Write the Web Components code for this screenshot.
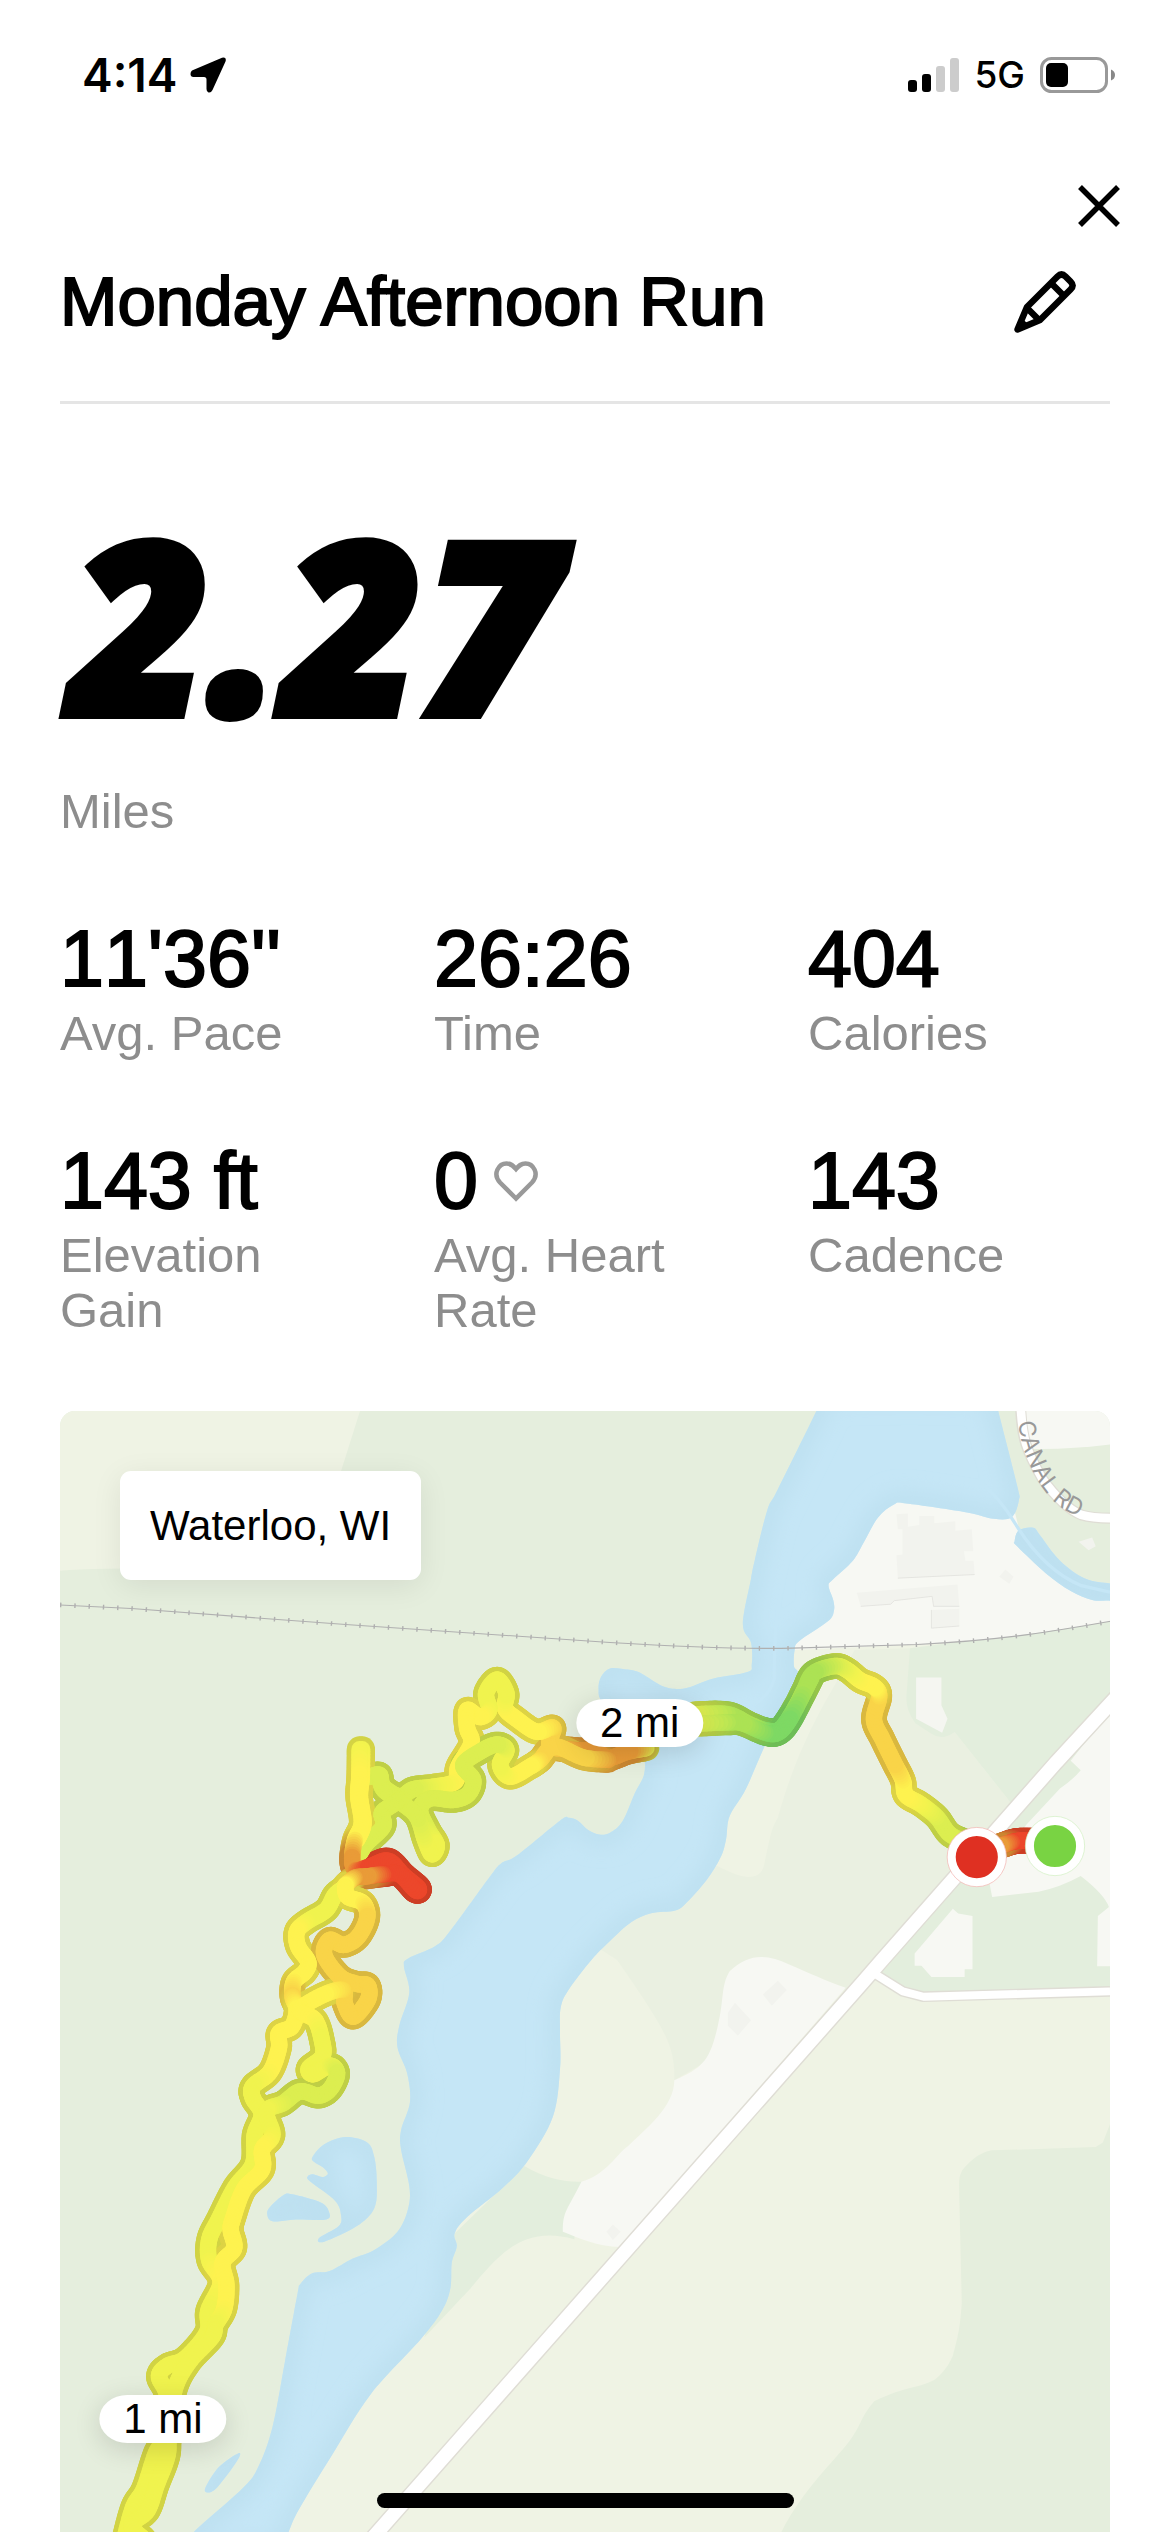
<!DOCTYPE html>
<html lang="en">
<head>
<meta charset="utf-8">
<meta name="viewport" content="width=device-width, initial-scale=1">
<title>Monday Afternoon Run</title>
<style>
  body { margin: 0; background: #fff; color: #000; font-family: "Liberation Sans", Arial, sans-serif; }
</style>
</head>
<body>
<run-screen>
  <status-bar slot="status" time="4:14" network="5G"></status-bar>
  <run-header slot="header">Monday Afternoon Run</run-header>
  <run-hero slot="hero" unit="Miles">2.27</run-hero>
  <run-stats slot="stats">
    <run-stat label="Avg. Pace">11'36''</run-stat>
    <run-stat label="Time">26:26</run-stat>
    <run-stat label="Calories">404</run-stat>
    <run-stat label="Elevation Gain">143 ft</run-stat>
    <run-stat label="Avg. Heart Rate">0<heart-icon slot="icon"></heart-icon></run-stat>
    <run-stat label="Cadence">143</run-stat>
  </run-stats>
  <run-map slot="map">
    <map-place slot="place">Waterloo, WI</map-place>
    <mile-pin style="left:55.2%;top:27.8%">2 mi</mile-pin>
    <mile-pin style="left:9.8%;top:89.9%">1 mi</mile-pin>
  </run-map>
</run-screen>

<script>
const define = (name, html, setup) => {
  const template = document.createElement('template');
  template.innerHTML = html;
  customElements.define(name, class extends HTMLElement {
    constructor() {
      super();
      this.attachShadow({ mode: 'open' }).append(template.content.cloneNode(true));
    }
    connectedCallback() { if (setup) setup(this, this.shadowRoot); }
  });
};

define('run-screen', `
<style>
  :host { display: block; }
  main { display: flex; flex-direction: column; padding: 0 60px; }
  .stats { margin-top: 75px; }
  .map { margin-top: 73px; }
  .home { position: fixed; left: 50%; bottom: 24px; width: 417px; height: 15px; margin-left: -208px; border-radius: 8px; background: #000; }
</style>
<slot name="status"></slot>
<slot name="header"></slot>
<main>
  <slot name="hero"></slot>
  <div class="stats"><slot name="stats"></slot></div>
  <div class="map"><slot name="map"></slot></div>
</main>
<div class="home"></div>`);

define('status-bar', `
<style>
  :host { display: flex; justify-content: space-between; align-items: center; height: 150px; padding: 0 55px 0 82px; font-family: Inter, sans-serif; }
  .side { display: flex; align-items: center; }
  .time { font-size: 46px; font-weight: 600; line-height: 56px; }
  .net { font-size: 37px; font-weight: 500; line-height: 46px; }
  .left { gap: 13px; } .right { gap: 15px; }
  svg { display: block; }
</style>
<div class="side left">
  <span class="time"></span>
  <svg width="37" height="36" viewBox="0 0 37 36"><path d="M2 13.500 32 .8Q37-.2 35.500 4.500L22.500 33Q21 36 18.500 35.500 16.500 35 16.500 32V22.500Q16.500 20 14 20H3.500Q.5 20 .5 17 .5 14.500 2 13.500Z"/></svg>
</div>
<div class="side right">
  <svg width="51" height="34" viewBox="0 0 51 34">
    <rect y="22" width="9" height="12" rx="3"/><rect x="14" y="16" width="9" height="18" rx="3"/>
    <g fill="#ccc"><rect x="28" y="8" width="9" height="26" rx="3"/><rect x="42" width="9" height="34" rx="3"/></g>
  </svg>
  <span class="net"></span>
  <svg width="75" height="36" viewBox="0 0 75 36">
    <rect x="1.500" y="1.500" width="65" height="33" rx="10" fill="none" stroke="#999" stroke-width="3"/>
    <rect x="6" y="6" width="22" height="24" rx="5"/><path d="M71 12.500Q75 14 75 18T71 23.500Z" fill="#888"/>
  </svg>
</div>`, (el, root) => {
  root.querySelector('.time').textContent = el.getAttribute('time');
  root.querySelector('.net').textContent = el.getAttribute('network');
});

define('run-header', `
<style>
  :host { display: block; }
  .close { display: flex; justify-content: flex-end; align-items: center; height: 112px; padding-right: 30px; }
  .title { display: flex; justify-content: space-between; align-items: center; margin: 0 60px; padding-bottom: 59px; border-bottom: 3px solid #e5e5e5; }
  h1 { margin: 0; font-size: 69px; line-height: 80px; font-weight: 400; -webkit-text-stroke: 2px currentColor; }
  button { display: flex; align-items: center; justify-content: center; width: 82px; height: 80px; padding: 0; border: 0; background: none; color: #000; }
  .edit { margin-right: 24px; }
</style>
<div class="close"><button aria-label="Close">
  <svg width="42" height="42" viewBox="0 0 42 42"><path d="M2 2 40 40M40 2 2 40" stroke="currentColor" stroke-width="5.500"/></svg>
</button></div>
<div class="title">
  <h1><slot></slot></h1>
  <button class="edit" aria-label="Edit name">
    <svg width="62" height="62" viewBox="0 0 62 62" fill="none" stroke="currentColor" stroke-width="6.500" stroke-linejoin="round">
      <path d="M3.500 58.500 13 36 43.500 5.500Q47.500 1.500 51.500 5.500L56.500 10.500Q60.500 14.500 56.500 18.500L26 49Z"/><path d="M37 12 50 25M13 37 25 49"/><path d="M4 58 8 49 14 54Z" fill="currentColor" stroke-width="2"/>
    </svg>
  </button>
</div>`);

define('run-hero', `
<style>
  :host { display: flex; flex-direction: column; gap: 52px; padding-top: 108px; }
  .figure { padding-left: 10px; font: italic 800 240px/220px "Open Sans", sans-serif; -webkit-text-stroke: 8px currentColor; }
  .unit { font-size: 49px; line-height: 55px; color: #8d8d8d; }
</style>
<div class="figure"><slot></slot></div>
<div class="unit"></div>`, (el, root) => { root.querySelector('.unit').textContent = el.getAttribute('unit'); });

define('run-stats', `
<style>:host { display: grid; grid-template-columns: repeat(3, 1fr); gap: 75px 72px; }</style>
<slot></slot>`);

define('run-stat', `
<style>
  :host { display: flex; flex-direction: column; gap: 2px; }
  .value { display: flex; align-items: center; gap: 16px; font-size: 79px; line-height: 90px; font-kerning: none; -webkit-text-stroke: 2px currentColor; }
  .label { font-size: 49px; line-height: 55px; color: #8d8d8d; }
</style>
<div class="value"><span><slot></slot></span><slot name="icon"></slot></div>
<div class="label"></div>`, (el, root) => { root.querySelector('.label').textContent = el.getAttribute('label'); });

define('heart-icon', `
<style>:host { display: block; } svg { display: block; }</style>
<svg width="44" height="41" viewBox="0 0 44 41"><path d="M22 37.500 6 21.500C-2 12.500 5 2.500 12.500 2.500 17 2.500 19 4.500 22 8 25 4.500 27 2.500 31.500 2.500 39 2.500 46 12.500 38 21.500Z" fill="none" stroke="#999" stroke-width="4.500"/></svg>`);

define('map-place', `
<style>:host { display: block; padding: 27px 30px; border-radius: 11px; background: #fff; font-size: 42px; line-height: 55px; box-shadow: 0 6px 30px rgba(0,0,0,.08); }</style>
<slot></slot>`);

define('mile-pin', `
<style>:host { position: absolute; transform: translate(-50%, -50%); padding: 0 24px; border-radius: 28px / 24px; background: #fff; font-size: 42px; line-height: 48px; white-space: nowrap; box-shadow: 0 6px 28px rgba(0,0,0,.14); }</style>
<slot></slot>`);

/* Catmull-Rom spline through a flat list of coordinates, closed as an area. */
const area = flat => {
  const p = [];
  for (let i = 0; i < flat.length; i += 2) p.push([flat[i], flat[i + 1]]);
  const n = p.length, at = i => p[(i + n) % n];
  let d = `M${p[0]}`;
  for (let i = 0; i < n; i++) {
    const [a, b, c, e] = [at(i - 1), at(i), at(i + 1), at(i + 2)];
    d += `C${b[0] + (c[0] - a[0]) / 6} ${b[1] + (c[1] - a[1]) / 6} ${c[0] - (e[0] - b[0]) / 6} ${c[1] - (e[1] - b[1]) / 6} ${c}`;
  }
  return d + 'Z';
};

const WATER = [
  [2140,-20, 2118,31, 2010,250, 1980,310, 1945,450, 1935,500, 1912,628, 1935,680, 1937,740, 1925,762, 1830,780, 1760,805, 1720,809, 1680,798, 1620,762, 1580,754, 1540,752, 1515,775, 1508,810, 1520,850, 1600,950, 1634,1000, 1635,1050, 1610,1100, 1575,1180, 1540,1212, 1510,1217, 1480,1205, 1450,1178, 1425,1170, 1400,1178, 1280,1275, 1235,1298, 1200,1340, 1090,1490, 1050,1530, 975,1564, 963,1586, 978,1660, 950,1752, 945,1813, 972,1885, 980,1966, 955,2045, 955,2099, 978,2201, 975,2263, 945,2329, 880,2380, 820,2404, 755,2439, 705,2446, 672,2477, 665,2503, 630,2692, 595,2876, 555,2988, 510,3049, 375,3170, 340,3220, 620,3220, 640,3170, 670,3105, 760,2957, 870,2784, 1010,2630, 1070,2549, 1093,2487, 1097,2416, 1111,2370, 1105,2334, 1140,2288, 1240,2206, 1310,2130, 1380,2007, 1400,1874, 1400,1772, 1402,1701, 1425,1650, 1488,1568, 1540,1515, 1600,1462, 1655,1437, 1720,1430, 1750,1412, 1810,1345, 1850,1280, 1865,1230, 1875,1165, 1920,1090, 1975,965, 2030,850, 2065,770, 2055,745, 2057,700, 2070,675, 2150,620, 2167,590, 2165,560, 2152,520, 2165,502, 2220,450, 2250,400, 2290,330, 2335,293, 2370,290, 2540,315, 2615,333, 2665,328, 2685,280, 2680,240, 2627,31, 2615,-20],
  [2673,395, 2685,365, 2725,358, 2745,380, 2800,450, 2870,500, 2940,514, 2990,520, 2990,565, 2940,562, 2890,560, 2830,535, 2760,485, 2680,410],
  [707,2120, 740,2084, 800,2064, 860,2079, 880,2120, 887,2191, 880,2263, 830,2314, 740,2357, 725,2347, 780,2314, 787,2283, 770,2242, 700,2188, 694,2174, 708,2168, 735,2176, 750,2166, 735,2148, 712,2134],
  [580,2278, 590,2258, 625,2227, 650,2224, 730,2247, 753,2273, 745,2295, 660,2295, 595,2300],
  [500,2949, 495,2972, 440,3045, 412,3059, 408,3044, 445,2988]
].map(area);

/* Pace colours, fast to slow. */
const PACE = { G: [126,217,100], E: [172,226,84], L: [220,238,80], M: [240,243,78], Y: [254,242,79], A: [249,212,72], O: [233,155,56], R: [236,71,43] };

const TRACK = [
  'R 2787 1232 R 2720 1234 R 2690 1234 R 2665 1238 O 2630 1250 O 2600 1262',
  'E 2567 1262 E 2535 1238 L 2490 1215 L 2455 1168 M 2410 1132 Y 2368 1106 Y 2360 1065 A 2335 1015 A 2303 950 A 2279 895 A 2294 830 Y 2280 803 Y 2240 785 M 2205 757 L 2170 745 E 2110 765 E 2085 810 E 2065 850 G 2035 900 G 2012 925 G 1975 925 E 1930 908 E 1870 880 L 1780 880',
  'E 2105 775 E 2080 825 G 2040 900 G 2010 932 G 1975 932 E 1910 905 E 1870 903 L 1780 907',
  'L 1642 975 O 1590 985 O 1535 1003 O 1502 984 O 1440 980 A 1372 968 A 1381 918 Y 1334 929 Y 1278 893 Y 1246 863 M 1250 821 M 1224 783 M 1193 821 M 1202 868 Y 1176 888 Y 1140 868 Y 1140 919 Y 1152 961 Y 1115 1027 Y 1106 1069 M 1045 1083 L 989 1090 L 952 1110 L 905 1083 L 895 1050 L 868 1055',
  'O 1535 1008 A 1465 1001 A 1385 970 A 1344 1008 Y 1316 1027 Y 1260 1055 M 1232 1022 M 1250 980 L 1222 965 L 1176 985 L 1129 1022 L 1157 1064 L 1143 1104 L 1101 1120 L 1036 1116 L 1008 1148 L 1031 1204 M 1055 1246 M 1041 1272 M 1022 1232 L 999 1166 L 952 1125 L 905 1090 L 895 1050',
  'L 952 1120 L 929 1135 L 901 1157 L 905 1194 L 859 1241 L 840 1269',
  'M 846 978 Y 845 1055 Y 840 1111 Y 850 1185 Y 832 1232',
  'M 839 978 Y 838 1055 Y 835 1111 Y 845 1185 Y 826 1232 O 818 1285 O 828 1316 R 868 1306 R 919 1290 R 961 1330 R 1003 1366 R 994 1372 R 950 1328 R 905 1328 O 859 1334 O 825 1338 Y 798 1360',
  'Y 798 1365 M 770 1386 M 745 1428 M 691 1461 Y 663 1489 Y 667 1531 Y 695 1573 Y 686 1601 Y 655 1629 A 651 1671 Y 663 1708 Y 649 1755 Y 613 1773 Y 613 1815 Y 588 1882 M 540 1922 M 540 1955 M 565 2000 M 545 2058 M 540 2140 M 490 2205 M 445 2293 M 418 2350 M 418 2410 Y 450 2470 M 415 2550 M 412 2610 M 350 2684 M 300 2705 M 277 2735 M 300 2790 M 295 2900 M 268 2950 M 235 3049 M 205 3100 M 180 3190',
  'Y 798 1365 Y 806 1391 Y 849 1409 A 860 1451 A 833 1505 A 793 1526 A 755 1512 A 740 1554 A 784 1615 A 831 1635 A 862 1640 A 862 1680 A 821 1727 A 797 1689 A 793 1652 Y 737 1666 Y 672 1708 Y 714 1736 M 733 1792 M 735 1838 M 697 1871 M 709 1888 M 756 1864 L 776 1887 L 756 1930 L 723 1948 L 672 1936 L 625 1969 M 578 1992 M 595 2058 Y 566 2099 Y 566 2155 Y 515 2210 Y 485 2290 Y 478 2324 Y 488 2375 Y 455 2416 Y 466 2477 Y 460 2545 M 435 2590 M 425 2625 M 360 2696 M 320 2775 M 305 2900 M 300 2960 M 270 3040 M 245 3110 M 200 3150 M 235 3190'
];

const trace = text => {
  const t = text.split(' '), p = [];
  for (let i = 0; i < t.length; i += 3) p.push([+t[i + 1], +t[i + 2], ...PACE[t[i]]]);
  const out = [];
  for (let i = 0; i < p.length - 1; i++) {
    const a = p[Math.max(i - 1, 0)], b = p[i], c = p[i + 1], e = p[Math.min(i + 2, p.length - 1)];
    for (let s = 0; s < 8; s++) {
      const u = s / 8;
      out.push(b.map((v, k) => {
        if (k > 1) return v + (c[k] - v) * u;
        const linear = (c[k] - a[k]) * u;
        const square = (2 * a[k] - 5 * v + 4 * c[k] - e[k]) * u * u;
        const cube = (3 * v - a[k] - 3 * c[k] + e[k]) * u * u * u;
        return (2 * v + linear + square + cube) / 2;
      }));
    }
  }
  out.push(p[p.length - 1]);
  return out;
};

const strokes = (track, width, shade) => track.slice(1).map((q, i) => {
  const o = track[i], c = q.slice(2).map(v => Math.round(v * shade));
  return `<line x1="${o[0].toFixed(1)}" y1="${o[1].toFixed(1)}" x2="${q[0].toFixed(1)}" y2="${q[1].toFixed(1)}" stroke="rgb(${c})" stroke-width="${width}"/>`;
}).join('');

const tracks = TRACK.map(trace);
const route = tracks.map(t => strokes(t, 72, .87)).join('') + tracks.map(t => strokes(t, 46, 1)).join('');
const water = WATER.map(d => `<path d="${d}"/>`).join('');
const rail = 'M0 574 L200 584 L800 629 L1540 679 C1800 695 1950 697 2050 695 L2400 685 C2650 672 2800 645 2940 620';

define('run-map', `
<style>
  :host { display: block; position: relative; aspect-ratio: 1050 / 1121; overflow: hidden; border-radius: 15px 15px 0 0; }
  svg { display: block; width: 100%; height: 100%; }
  .place { position: absolute; left: 60px; top: 60px; }
</style>
<svg viewBox="0 31 2940 3139" preserveAspectRatio="xMidYMin slice" role="img" aria-label="Route map">
  <defs>
    <clipPath id="shore">${water}</clipPath>
    <filter id="soft" x="-10%" y="-10%" width="120%" height="120%"><feGaussianBlur stdDeviation="28"/></filter>
    <path id="canal" d="M2683 62C2692 150 2735 240 2790 290 2820 315 2850 330 2900 342L2960 350"/>
  </defs>
  <rect y="31" width="2940" height="3139" fill="#e5eedd"/>
  <path d="M0 31H840L787 199 700 474Q160 466 0 478Z" fill="#eff3e4"/>
  <path d="M2000 690 2940 620V3170H500L650 2950 900 2500 1250 1900 1600 1400 1850 1000Z" fill="#eff3e4"/>
  <path d="M2225 700 2380 695 2505 930 2660 1125 2480 1340 2200 1650 1900 1800 1720 1905C1722 1810 1700 1770 1560 1568L1500 1530 1700 1350 1840 1305C1880 1325 1900 1333 1925 1336 1950 1336 1965 1330 1972 1300 1985 1240 1990 1200 2010 1170 2040 1060 2080 960 2140 850Z" fill="#eaf0e1"/>
  <path d="M2380 695 2940 620V1656L2418 1671 2290 1605 2660 1125 2505 930Q2470 955 2440 935L2395 905Q2368 870 2370 830Z" fill="#e3eedd"/>
  <path d="M2050 700 2080 400 2340 250 2670 300 2700 420 2940 550V620C2800 645 2600 675 2400 685Z" fill="#f7f8f3"/>
  <path d="M2690 31H2940V125Q2820 140 2710 137Z" fill="#f7f8f3"/>
  <path d="M2940 870 2830 1010 2858 1037Q2840 1060 2800 1088L2705 1190 2600 1340 2610 1392 2740 1377Q2800 1365 2858 1333 2925 1385 2937 1420L2906 1445 2904 1586H2940Z" fill="#f7f8f3"/>
  <path d="M2393 1550 2500 1425 2515 1438 2555 1445V1594H2533V1616H2440L2412 1584H2393Z" fill="#f7f8f3"/>
  <path d="M1105 2334 1300 2145Q1380 2192 1460 2189L1440 2350C1300 2310 1230 2390 1150 2487L1020 2625Z" fill="#e3eedd"/>
  <path d="M1720 1905C1800 1870 1820 1850 1842 1752 1860 1680 1850 1640 1875 1600 1925 1550 1980 1550 2040 1580 2100 1605 2140 1625 2200 1646L1570 2372C1500 2370 1450 2345 1408 2329 1408 2270 1420 2270 1460 2189 1530 2170 1560 2110 1590 2090 1640 2040 1720 1980 1720 1905Z" fill="#f7f8f3"/>
  <path d="M2940 2028 2920 2079 2900 2092 2720 2098 2610 2101C2570 2105 2530 2150 2525 2160 2515 2180 2518 2190 2518 2230L2525 2528C2520 2600 2515 2620 2500 2676 2485 2710 2470 2725 2450 2743 2400 2770 2370 2760 2280 2804 2240 2850 2245 2870 2210 2916 2170 2970 2080 3050 2020 3170H2940Z" fill="#e5eedd"/>
  <g fill="#f2f3ee">
    <path d="M2342 320 2374 318V355L2406 350V325H2448V345L2507 340V366L2553 362 2557 424H2531L2535 450H2558L2561 489 2346 499 2342 435 2359 433V362H2346Z"/>
    <path d="M2231 540 2513 517 2518 578H2446L2442 550 2336 562 2326 572 2242 578ZM2440 588 2518 585V633L2440 639Z"/>
    <path d="M2647 475 2670 495 2658 515 2630 495ZM2852 397 2890 385 2900 410 2880 421Z"/>
    <path d="M2397 777H2468V855L2485 893 2470 932 2397 893Z" fill="#f5f6f1"/>
    <path d="M1890 1688 1935 1737 1898 1780 1870 1752V1716ZM2010 1626 2035 1652 1993 1696 1968 1665ZM1548 2309 1570 2329 1548 2352 1530 2329Z"/>
  </g>
  <path d="M2346 499 2561 489M2242 578 2326 572 2336 562 2442 550 2446 578H2518M2440 588V639L2518 633" fill="none" stroke="#dedfda" stroke-width="2"/>
  <g fill="none" stroke-linejoin="round">
    <g stroke="#dfddd5">
      <path stroke-width="31" d="M2690 31C2695 110 2705 140 2750 220 2790 275 2830 310 2860 322Q2890 331 2940 331"/>
      <path stroke-width="30" d="M2288 1611 2360 1656 2418 1671 2940 1656"/>
      <path stroke-width="46" d="M2980 808 2790 1014 2302 1568 2250 1628 840 3226"/>
    </g>
    <g stroke="#fff">
      <path stroke-width="24" d="M2690 20C2695 110 2705 140 2750 220 2790 275 2830 310 2860 322Q2890 331 2940 331"/>
      <path stroke-width="22" d="M2280 1606 2360 1656 2418 1671 2940 1656"/>
      <path stroke-width="38" d="M2980 808 2790 1014 2302 1568 2250 1628 840 3226"/>
    </g>
  </g>
  <g fill="#c5e6f6">${water}</g>
  <g clip-path="url(#shore)"><g fill="none" stroke="#bde0f0" stroke-width="60" filter="url(#soft)">${water}</g></g>
  <path d="M2570 225Q2630 270 2680 355 2760 480 2860 520L2940 538M2010 590Q2000 650 2000 780 1990 820 1950 850" fill="none" stroke="#c5e6f6" stroke-width="9"/>
  <path d="${rail}" fill="none" stroke="#b0b0b0" stroke-width="3"/>
  <path d="${rail}" fill="none" stroke="#b0b0b0" stroke-width="13" stroke-dasharray="4 36"/>
  <text font-family="Inter, sans-serif" font-size="65" fill="#999"><textPath href="#canal">CANAL RD</textPath></text>
  <g stroke-linecap="round">${route}</g>
  <g stroke="#fff" stroke-width="24">
    <circle cx="2786" cy="1249" r="71" fill="#79d343"/>
    <circle cx="2567" cy="1280" r="71" fill="#df3022"/>
  </g>
  <circle cx="2786" cy="1249" r="83" fill="none" stroke="#d2efc2" stroke-width="2"/>
  <circle cx="2567" cy="1280" r="83" fill="none" stroke="#f3b5b0" stroke-width="2"/>
</svg>
<div class="place"><slot name="place"></slot></div>
<slot></slot>`);
</script>
</body>
</html>
